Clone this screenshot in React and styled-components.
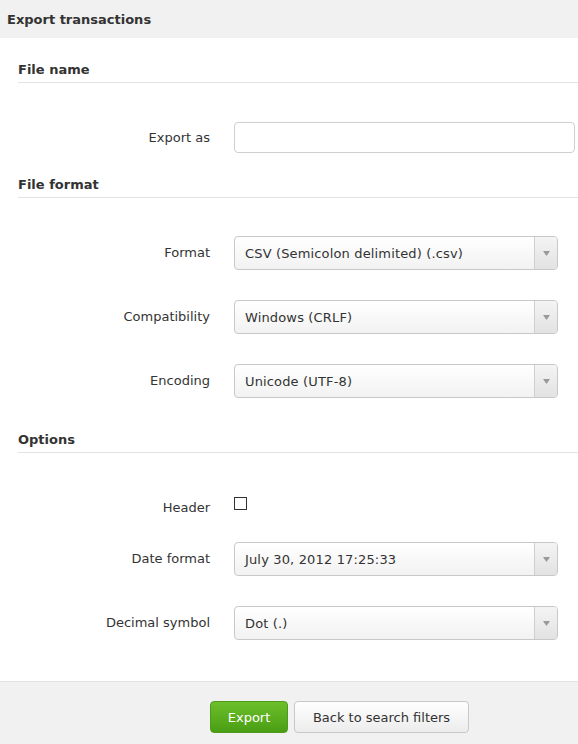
import React from "react";
import styled, { createGlobalStyle } from "styled-components";

const Global = createGlobalStyle`
  html, body { margin: 0; padding: 0; background: #fff; }
  body { font-family: "DejaVu Sans", Verdana, sans-serif; font-size: 13px; color: #333; }
  #root { width: 578px; height: 744px; display: flex; flex-direction: column; }
`;

const TitleBar = styled.div`
  box-sizing: border-box;
  height: 38px;
  background: #f1f1f1;
  display: flex;
  align-items: center;
  padding: 0 7px;
  font-weight: bold;
  font-size: 13px;
  color: #333;
`;

const Body = styled.div`
  flex: 1;
  padding: 0 0 0 18px;
`;

const SectionTitle = styled.div`
  font-weight: bold;
  font-size: 13px;
  color: #333;
  border-bottom: 1px solid #e2e2e2;
  padding: ${(p) => p.$top}px 0 4px 0;
  line-height: 16px;
`;

const Rows = styled.div`
  display: flex;
  flex-direction: column;
  gap: 30px;
  padding-top: ${(p) => p.$top}px;
`;

const Row = styled.div`
  display: grid;
  grid-template-columns: 192px 1fr;
  column-gap: 24px;
  align-items: ${(p) => (p.$top ? "start" : "center")};
  margin-bottom: ${(p) => p.$mb || 0}px;
`;

const Label = styled.label`
  text-align: right;
  color: #333;
  font-size: 13px;
  line-height: 16px;
  padding-top: ${(p) => p.$pt || 0}px;
`;

const TextInput = styled.input`
  box-sizing: border-box;
  width: 341px;
  height: 31px;
  border: 1px solid #cfcfcf;
  border-radius: 4px;
  background: #fff;
  font: inherit;
  padding: 0 10px;
`;

const Select = styled.div`
  box-sizing: border-box;
  width: 324px;
  height: 34px;
  border: 1px solid #c8c8c8;
  border-radius: 4px;
  display: flex;
  background: linear-gradient(#ffffff, #f2f2f2);
  overflow: hidden;
`;

const SelectValue = styled.div`
  flex: 1;
  display: flex;
  align-items: center;
  padding-left: 10px;
  color: #333;
  font-size: 13px;
  letter-spacing: 0.15px;
`;

const Arrow = styled.div`
  width: 22px;
  border-left: 1px solid #cfcfcf;
  background: linear-gradient(#f4f4f4, #e2e2e2);
  display: flex;
  align-items: center;
  justify-content: center;
`;

const Check = styled.span`
  box-sizing: border-box;
  width: 13px;
  height: 13px;
  border: 1px solid #333;
  background: #fff;
  display: block;
`;

const Footer = styled.div`
  box-sizing: border-box;
  height: 63px;
  border-top: 1px solid #e2e2e2;
  background: #f1f1f1;
  display: flex;
  align-items: flex-start;
  padding: 19px 0 0 210px;
  gap: 6px;
`;

const Button = styled.button`
  box-sizing: border-box;
  width: ${(p) => p.$w}px;
  height: 32px;
  border-radius: 4px;
  font: inherit;
  font-size: 13px;
  padding: 0;
  cursor: pointer;
  color: ${(p) => (p.$primary ? "#fff" : "#333")};
  border: 1px solid ${(p) => (p.$primary ? "#4f9a1a" : "#c8c8c8")};
  background: ${(p) =>
    p.$primary
      ? "linear-gradient(#6cbf2a, #4a9e14)"
      : "linear-gradient(#ffffff, #ececec)"};
`;

const SelectBox = ({ value }) => (
  <Select>
    <SelectValue>{value}</SelectValue>
    <Arrow>
      <svg width="7" height="5" viewBox="0 0 7 5">
        <path d="M0 0h7L3.5 5z" fill="#999" />
      </svg>
    </Arrow>
  </Select>
);

export default function App() {
  return (
    <>
      <Global />
      <TitleBar>Export transactions</TitleBar>
      <Body>
        <SectionTitle $top={24}>File name</SectionTitle>
        <Rows $top={39}>
          <Row>
            <Label>Export as</Label>
            <TextInput />
          </Row>
        </Rows>
        <SectionTitle $top={24}>File format</SectionTitle>
        <Rows $top={38}>
          <Row>
            <Label>Format</Label>
            <SelectBox value="CSV (Semicolon delimited) (.csv)" />
          </Row>
          <Row>
            <Label>Compatibility</Label>
            <SelectBox value="Windows (CRLF)" />
          </Row>
          <Row>
            <Label>Encoding</Label>
            <SelectBox value="Unicode (UTF-8)" />
          </Row>
        </Rows>
        <SectionTitle $top={34}>Options</SectionTitle>
        <Rows $top={44}>
          <Row $top $mb={-4}>
            <Label $pt={3}>Header</Label>
            <Check />
          </Row>
          <Row>
            <Label>Date format</Label>
            <SelectBox value="July 30, 2012 17:25:33" />
          </Row>
          <Row>
            <Label>Decimal symbol</Label>
            <SelectBox value="Dot (.)" />
          </Row>
        </Rows>
      </Body>
      <Footer>
        <Button $primary $w={78}>Export</Button>
        <Button $w={175}>Back to search filters</Button>
      </Footer>
    </>
  );
}
